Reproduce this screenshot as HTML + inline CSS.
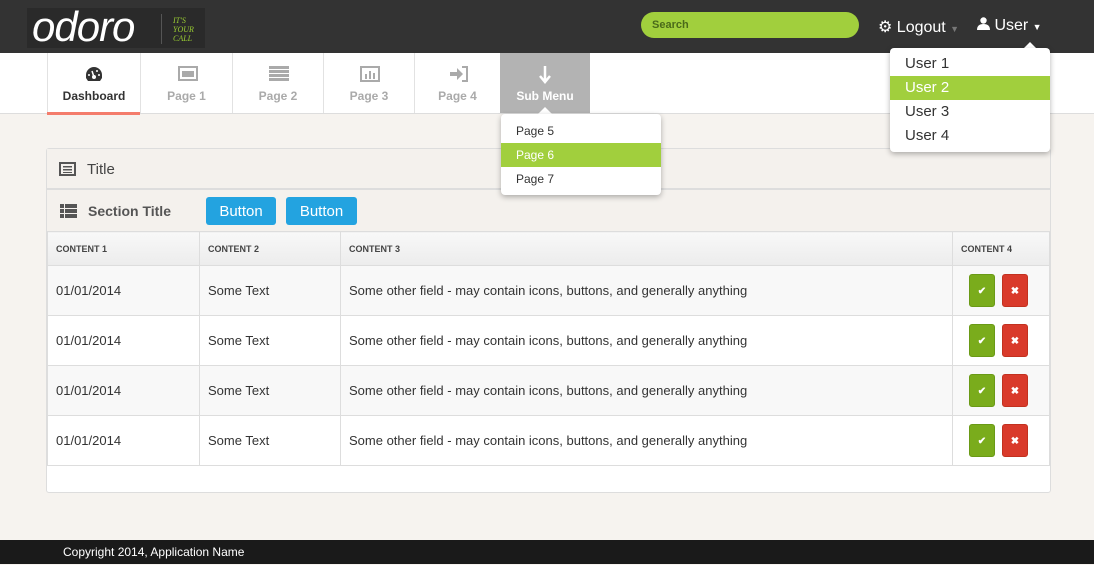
<!DOCTYPE html>
<html><head><meta charset="utf-8"><style>
*{box-sizing:border-box;margin:0;padding:0}
body{width:1094px;height:564px;background:#f6f3ef;font-family:"Liberation Sans",sans-serif;position:relative;overflow:hidden;color:#333}
.abs{position:absolute}
#hdr{left:0;top:0;width:1094px;height:53px;background:#333}
#logo{left:27px;top:8px;width:178px;height:40px;background:#2a2a2a}
#nav{left:0;top:53px;width:1094px;height:61px;background:#fff;border-bottom:1px solid #ddd}
.tab{top:53px;height:60px;border-left:1px solid #e2e2e2;text-align:center;font-size:12px;font-weight:bold;color:#aaa}
.tab .lbl{position:absolute;left:0;right:0;top:36px}
.tab svg{position:absolute;left:50%;top:13px;margin-left:-9px}
.dd{background:#fff;border-radius:4px;box-shadow:0 2px 6px rgba(0,0,0,.3)}
.dd div{height:24px;line-height:24px}
.g{background:#a1cf3d;color:#fff}
#panel{left:46px;top:148px;width:1005px;height:345px;border:1px solid #ddd;border-radius:3px;background:#fff}
table{border-collapse:collapse;position:absolute;left:47px;top:231px;width:1003px;font-size:13px}
td,th{border:1px solid #ddd;text-align:left;padding:0 8px}
th{height:34px;font-size:9px;font-weight:bold;background:linear-gradient(#f8f8f8,#ececec);color:#444}
td{height:50px;background:#fff}
tr.o td{background:#f8f8f8}
.bt{display:inline-block;width:26px;height:33px;border-radius:3px;color:#fff;font-size:10px;line-height:33px;text-align:center;font-weight:bold;vertical-align:middle}
.ok{background:#7aac1c;border:1px solid #6a9a16;margin-left:6px}.no{background:#d93a2b;border:1px solid #c2311f;margin-left:7px}
.btn{top:197px;height:28px;border-radius:3px;background:#23a3e0;color:#fff;font-size:15px;line-height:30px;text-align:center}
</style></head><body>
<div id="hdr" class="abs"></div>
<div id="logo" class="abs">
 <span class="abs" style="left:5px;top:-5px;font-size:42px;color:#fff;letter-spacing:-1px;font-style:italic">odoro</span>
 <div class="abs" style="left:134px;top:6px;width:1px;height:30px;background:#555"></div>
 <div class="abs" style="left:146px;top:8px;font-size:8px;line-height:9px;color:#9c3;font-style:italic;font-family:'Liberation Serif',serif">IT'S<br>YOUR<br>CALL</div>
</div>
<div class="abs" style="left:641px;top:12px;width:218px;height:26px;border-radius:13px;background:#a1cf3d;font-size:11px;font-weight:bold;color:#4a6a1a;line-height:26px;padding-left:11px">Search</div>
<div class="abs" style="left:878px;top:17px;color:#fff;font-size:16px">⚙ Logout <span style="font-size:9px;color:#777">▼</span></div>
<div class="abs" style="left:977px;top:17px;color:#fff;font-size:16px"><svg width="13" height="13" viewBox="0 0 13 13"><circle cx="6.5" cy="3.5" r="3.2" fill="#fff"/><path d="M0 13 Q0 7 6.5 7 Q13 7 13 13Z" fill="#fff"/></svg> User <span style="font-size:9px">▼</span></div>
<div id="nav" class="abs"></div>
<div class="abs tab" style="left:47px;width:93px;color:#333"><svg width="18" height="16" viewBox="0 0 18 16"><path d="M9 1A8 8 0 0 0 1 9v3l2 3h12l2-3V9A8 8 0 0 0 9 1z" fill="#333"/><circle cx="9" cy="11" r="2" fill="#fff"/><path d="M9 11L7 5" stroke="#fff" stroke-width="1.5"/><circle cx="4" cy="9" r="1" fill="#fff"/><circle cx="14" cy="9" r="1" fill="#fff"/><circle cx="12" cy="5" r="1" fill="#fff"/></svg><div class="lbl">Dashboard</div></div>
<div class="abs" style="left:47px;top:112px;width:93px;height:3px;background:#f47c6c"></div>
<div class="abs tab" style="left:140px;width:92px"><svg width="20" height="15"><rect x="1" y="1" width="18" height="13" fill="none" stroke="#aaa" stroke-width="2"/><rect x="4" y="5" width="12" height="6" fill="#aaa"/></svg><div class="lbl">Page 1</div></div>
<div class="abs tab" style="left:232px;width:91px"><svg width="20" height="15"><g fill="#aaa"><rect x="0" y="0" width="20" height="3"/><rect x="0" y="4" width="20" height="3"/><rect x="0" y="8" width="20" height="3"/><rect x="0" y="12" width="20" height="3"/></g></svg><div class="lbl">Page 2</div></div>
<div class="abs tab" style="left:323px;width:91px"><svg width="20" height="16"><rect x="1" y="1" width="18" height="14" fill="none" stroke="#aaa" stroke-width="2"/><g fill="#aaa"><rect x="5" y="8" width="2" height="5"/><rect x="9" y="5" width="2" height="8"/><rect x="13" y="7" width="2" height="6"/></g></svg><div class="lbl">Page 3</div></div>
<div class="abs tab" style="left:414px;width:86px"><svg width="20" height="16"><path d="M1 6h7V2l6 6-6 6v-4H1z" fill="#aaa"/><path d="M13 1h5v14h-5" fill="none" stroke="#aaa" stroke-width="2"/></svg><div class="lbl">Page 4</div></div>
<div class="abs tab" style="left:500px;width:90px;background:#b3b3b3;color:#fff;border:none"><svg width="18" height="18"><path d="M9 0v15M4 10l5 6 5-6" stroke="#fff" stroke-width="2.5" fill="none"/></svg><div class="lbl">Sub Menu</div></div>
<div id="panel" class="abs">
 <div class="abs" style="left:0;top:0;width:1003px;height:41px;background:#f4f1ed;border-bottom:2px solid #ddd"></div>
 <div class="abs" style="left:0;top:41px;width:1003px;height:42px;background:#f4f1ed"></div>
</div>
<svg class="abs" style="left:59px;top:162px" width="17" height="14"><rect x="1" y="1" width="15" height="12" fill="none" stroke="#555" stroke-width="2"/><g fill="#555"><rect x="4" y="4" width="9" height="1.5"/><rect x="4" y="7" width="9" height="1.5"/><rect x="4" y="10" width="9" height="1"/></g></svg>
<div class="abs" style="left:87px;top:161px;font-size:15px;color:#444">Title</div>
<svg class="abs" style="left:60px;top:204px" width="17" height="14"><g fill="#555"><rect x="0" y="0" width="4" height="4"/><rect x="5" y="0" width="12" height="4"/><rect x="0" y="5" width="4" height="4"/><rect x="5" y="5" width="12" height="4"/><rect x="0" y="10" width="4" height="4"/><rect x="5" y="10" width="12" height="4"/></g></svg>
<div class="abs" style="left:88px;top:203px;font-size:14px;font-weight:bold;color:#555">Section Title</div>
<div class="abs btn" style="left:206px;width:70px">Button</div>
<div class="abs btn" style="left:286px;width:71px">Button</div>
<table>
<tr><th style="width:152px">CONTENT 1</th><th style="width:141px">CONTENT 2</th><th>CONTENT 3</th><th style="width:97px">CONTENT 4</th></tr>
<tr class="o"><td>01/01/2014</td><td>Some Text</td><td>Some other field - may contain icons, buttons, and generally anything</td><td style="padding:0 0 0 10px"><span class="bt ok">✔</span><span class="bt no">✖</span></td></tr>
<tr><td>01/01/2014</td><td>Some Text</td><td>Some other field - may contain icons, buttons, and generally anything</td><td style="padding:0 0 0 10px"><span class="bt ok">✔</span><span class="bt no">✖</span></td></tr>
<tr class="o"><td>01/01/2014</td><td>Some Text</td><td>Some other field - may contain icons, buttons, and generally anything</td><td style="padding:0 0 0 10px"><span class="bt ok">✔</span><span class="bt no">✖</span></td></tr>
<tr><td>01/01/2014</td><td>Some Text</td><td>Some other field - may contain icons, buttons, and generally anything</td><td style="padding:0 0 0 10px"><span class="bt ok">✔</span><span class="bt no">✖</span></td></tr>
</table>
<div class="abs" style="left:538px;top:107px;width:0;height:0;border:7px solid transparent;border-bottom-color:#fff;border-top:0"></div>
<div class="abs dd" style="left:501px;top:114px;width:160px;padding-top:5px;font-size:12px">
 <div style="padding-left:15px">Page 5</div><div class="g" style="padding-left:15px">Page 6</div><div style="padding-left:15px">Page 7</div><div style="height:4px"></div>
</div>
<div class="abs" style="left:1024px;top:42px;width:0;height:0;border:6px solid transparent;border-bottom-color:#fff;border-top:0"></div>
<div class="abs dd" style="left:890px;top:48px;width:160px;padding-top:4px;font-size:15px">
 <div style="padding-left:15px">User 1</div><div class="g" style="padding-left:15px">User 2</div><div style="padding-left:15px">User 3</div><div style="padding-left:15px">User 4</div><div style="height:4px"></div>
</div>
<div class="abs" style="left:0;top:540px;width:1094px;height:24px;background:#1a1a1a;color:#fff;font-size:12px;line-height:25px;padding-left:63px">Copyright 2014, Application Name</div>
</body></html>
